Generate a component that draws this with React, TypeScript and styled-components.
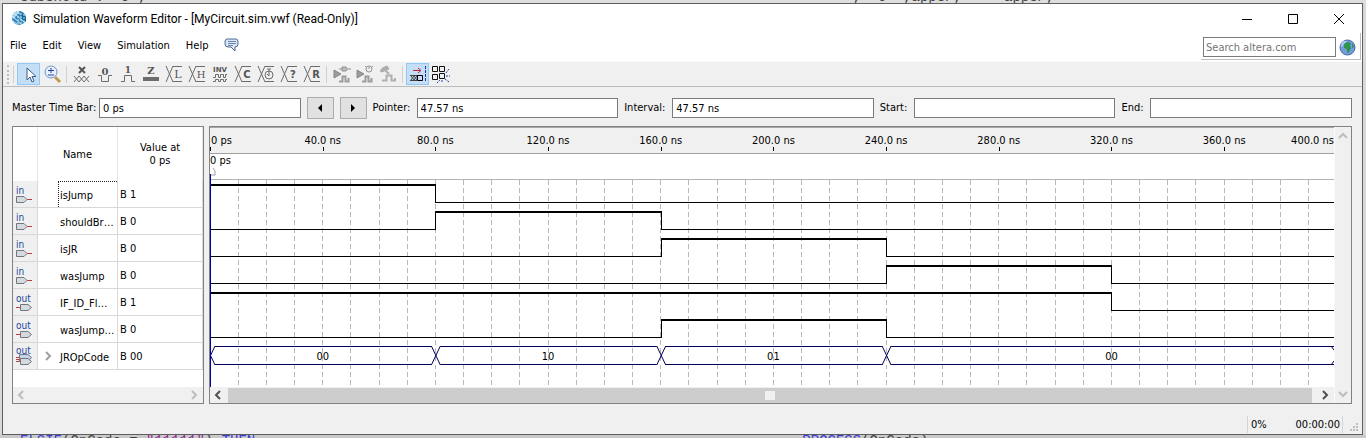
import React from "react";
import styled, { createGlobalStyle, css } from "styled-components";

const GlobalStyle = createGlobalStyle`
  * { box-sizing: border-box; }
  body { margin: 0; background: #d9d9d9; color: #000; font: 11px/14px "DejaVu Sans Condensed", "DejaVu Sans", "Open Sans", sans-serif; }
  input, button { font: inherit; color: inherit; border-radius: 0; margin: 0; }
`;

/* ---------- window frame ---------- */
const Desktop = styled.div`
  display: flex;
  flex-direction: column;
  min-height: 100vh;
`;
const CodeStrip = styled.div<{ $end?: boolean }>`
  display: flex;
  align-items: ${(p) => (p.$end ? "flex-start" : "flex-end")};
  height: ${(p) => (p.$end ? 4 : 3)}px;
  padding: 0 20px;
  overflow: hidden;
  background: ${(p) => (p.$end ? "#c9c9c9" : "#dedede")};
  font: 14px/12px "Liberation Mono", monospace;
  white-space: pre;
  color: #444;
`;
const CodeText = styled.span<{ $second?: boolean }>`
  flex: ${(p) => (p.$second ? "0 0 41%" : "1 1 0")};
  b { font-weight: 400; color: #3b3bd0; }
  i { font-style: normal; color: #8f2f8f; }
`;
const Window = styled.main`
  display: flex;
  flex-direction: column;
  margin: 0 3px 0 2px;
  border: 1px solid #5f5f63;
  background: #f0f0f0;
`;
const TitleBar = styled.header`
  display: flex;
  align-items: center;
  gap: 6px;
  height: 29px;
  padding-left: 8px;
  background: #fff;
`;
const Title = styled.h1`
  flex: 1;
  margin: 0;
  font: 400 12px/16px Roboto, "Open Sans", sans-serif;
`;
const CaptionButtons = styled.div`
  display: flex;
`;
const CaptionButton = styled.button`
  display: flex;
  justify-content: center;
  align-items: center;
  width: 46px;
  height: 28px;
  padding: 0;
  border: 0;
  background: none;
`;
const MenuRow = styled.div`
  display: flex;
  align-items: stretch;
  justify-content: space-between;
  height: 28px;
  background: #fff;
`;
const Menu = styled.nav`
  display: flex;
  align-items: center;
  gap: 16px;
  padding: 0 7px 3px;
`;
const MenuItem = styled.button`
  padding: 0;
  border: 0;
  background: none;
  line-height: 17px;
`;
const Search = styled.form`
  display: flex;
  align-items: center;
  gap: 3px;
  height: 27px;
  margin-right: 1px;
  padding: 2px 4px 0 2px;
  border: solid #bdbdbd;
  border-width: 0 1px 1px 0;
`;
const SearchInput = styled.input`
  width: 133px;
  height: 20px;
  padding: 0 2px;
  border: 1px solid #7a7a7a;
  &::placeholder { color: #757575; opacity: 1; }
`;

/* ---------- tool bar ---------- */
const Toolbar = styled.div`
  display: flex;
  align-items: center;
  height: 26px;
  padding-left: 4px;
  border-top: 1px solid #fafafa;
  border-bottom: 1px solid #bcbcbc;
`;
const Grip = styled.span`
  width: 3px;
  height: 19px;
  border-left: 2px dotted #bdbdbd;
`;
const Divider = styled.span`
  width: 1px;
  height: 17px;
  margin: 0 3px;
  background: #d0d0d0;
`;
const ToolButton = styled.button<{ $on?: boolean }>`
  display: flex;
  justify-content: center;
  align-items: center;
  width: 23px;
  height: 22px;
  padding: 0;
  border: 1px solid transparent;
  background: none;
  ${(p) => p.$on && css`
    border-color: #90c8f6;
    background: #c4dff5;
  `}
`;

/* ---------- time fields ---------- */
const TimeRow = styled.div`
  display: flex;
  align-items: center;
  gap: 6px;
  height: 39px;
  padding: 3px 10px 0 9px;
`;
const TimeLabel = styled.label<{ $w: number }>`
  flex: none;
  width: ${(p) => p.$w}px;
  white-space: nowrap;
`;
const TimeInput = styled.input`
  flex: 1;
  min-width: 0;
  height: 20px;
  padding: 1px 3px 0;
  border: 1px solid #7a7a7a;
  background: #fff;
`;
const StepButton = styled.button`
  display: flex;
  justify-content: center;
  align-items: center;
  width: 27px;
  height: 22px;
  padding: 0;
  border: 1px solid #adadad;
  background: #e1e1e1;
`;

/* ---------- panels ---------- */
const Panels = styled.div`
  display: flex;
  gap: 5px;
  padding: 0 10px 0 9px;
`;
const SignalPanel = styled.section`
  display: flex;
  flex-direction: column;
  justify-content: space-between;
  width: 192px;
  border: 1px solid #828282;
  background: #fff;
`;
const SignalTable = styled.table`
  width: 100%;
  table-layout: fixed;
  border-collapse: separate;
  border-spacing: 0;
`;
const HeadCell = styled.th<{ $w?: number }>`
  width: ${(p) => (p.$w ? `${p.$w}px` : "auto")};
  height: 54px;
  padding: 0;
  border-right: 1px solid #e5e5e5;
  font-weight: 400;
  text-align: center;
  line-height: 13px;
`;
const Cell = styled.td`
  height: 27px;
  padding: 2px 2px 0;
  border: solid #d8d8d8;
  border-width: 0 1px 1px 0;
  white-space: nowrap;
`;
const IconCell = styled(Cell)`
  padding: 0 0 0 3px;
  background: #f0f0f0;
  svg { display: block; overflow: visible; }
`;
const NameCell = styled(Cell)`
  padding: 0;
`;
const NameLine = styled.div`
  display: flex;
  align-items: center;
  height: 26px;
`;
const Expander = styled.span`
  display: flex;
  justify-content: center;
  width: 20px;
`;
const Name = styled.span<{ $focus?: boolean }>`
  flex: 1;
  height: 26px;
  padding-left: 1px;
  line-height: 27px;
  border: 1px dotted transparent;
  border-width: 1px 0 0 1px;
  ${(p) => p.$focus && css`border-color: #222;`}
`;
const HScroll = styled.div`
  display: flex;
  align-items: center;
  height: 16px;
  padding: 0 3px;
  gap: 3px;
  background: #f0f0f0;
`;
const Track = styled.div<{ $thumb?: boolean }>`
  flex: 1;
  display: flex;
  justify-content: center;
  align-items: center;
  height: 15px;
  margin-right: ${(p) => (p.$thumb ? 4 : 0)}px;
  background: ${(p) => (p.$thumb ? "#cdcdcd" : "transparent")};
`;
const Knob = styled.span`
  width: 10px;
  height: 9px;
  background: #f0f0f0;
`;
const WavePanel = styled.section`
  flex: 1;
  display: flex;
  min-width: 0;
  border: 1px solid #828282;
`;
const PlotColumn = styled.div`
  flex: 1;
  min-width: 0;
`;
const Ruler = styled.svg`
  display: block;
  width: 100%;
  height: 27px;
  border-top: 1px solid #a8a8a8;
  border-bottom: 1px solid #a0a0a0;
`;
const MarkerBand = styled.svg`
  display: block;
  width: 100%;
  height: 26px;
  overflow: visible;
  border-bottom: 1px solid #b4b4b4;
  background: #fff;
`;
const Plot = styled.svg`
  display: block;
  width: 100%;
  height: 207px;
  background: #fff;
`;
const VScroll = styled.div`
  display: flex;
  flex-direction: column;
  justify-content: space-between;
  align-items: center;
  width: 17px;
  padding: 3px 0;
  border-left: 1px solid #fafafa;
`;

/* ---------- status bar ---------- */
const StatusBar = styled.footer`
  display: flex;
  justify-content: flex-end;
  align-items: center;
  height: 30px;
  padding: 10px 3px 0 0;
`;
const StatusCell = styled.span<{ $w: number; $right?: boolean }>`
  width: ${(p) => p.$w}px;
  height: 17px;
  padding: 1px 2px 0 3px;
  line-height: 15px;
  text-align: ${(p) => (p.$right ? "right" : "left")};
  border: solid #d4d4d4;
  border-width: ${(p) => (p.$right ? "0 1px 0 0" : "0 0 0 1px")};
`;
const SizeGrip = styled.svg`
  margin: 7px 0 0 7px;
`;

/* ---------- icons ---------- */
const G = "#6c6c6c";

const Chevron = ({ d, color = "#bdbdbd" }: { d: "l" | "r" | "u" | "d"; color?: string }) => {
  const paths = { l: "M7 2L3 6L7 10", r: "M4 2L8 6L4 10", u: "M2 8L6 4L10 8", d: "M2 4L6 8L10 4" };
  return <svg width="12" height="12"><path d={paths[d]} fill="none" stroke={color} strokeWidth="2" /></svg>;
};

const Ic = ({ children }: { children: React.ReactNode }) => (
  <svg width="20" height="20" viewBox="0 0 20 20" fill="none" stroke={G} overflow="visible">{children}</svg>
);

const Glyph = ({ x, y, size = 10, serif, bold = true, children }: { x: number; y: number; size?: number; serif?: boolean; bold?: boolean; children: string }) => (
  <text x={x} y={y} fontSize={size} fontWeight={bold ? 700 : 400} fill="#555" stroke="none" textAnchor="middle"
    fontFamily={serif ? "'DejaVu Serif', serif" : "'DejaVu Sans', sans-serif"}>{children}</text>
);

const BusFrame = () => <path d="M2 2L9 18M9 2L2 18M9 2.5H18M9 17.5H18" />;

const AppLogo = () => (
  <svg width="16" height="17" viewBox="0 0 16 17">
    <circle cx="8" cy="8" r="7" fill="#2d86b8" />
    <path d="M1 8A7 7 0 0 1 8 1L8 4A5 5 0 0 0 4 9Z" fill="#a9d6ee" />
    <path d="M3 3L14 13M1 6L11 15M6 1L15 9M2 11L7 15" stroke="#d6edf8" strokeWidth="1" />
    <path d="M9 2L15 7L15 12L12 10Z" fill="#155c8e" />
    <path d="M10 3V14M13 4V13M7 6V15" stroke="#cfeaf7" strokeWidth="1" strokeDasharray="2 1" />
  </svg>
);

const CommentIcon = () => (
  <svg width="15" height="15" viewBox="0 0 15 15">
    <path d="M3 1H12Q14 1 14 4V6Q14 9 11 9L11 13L7 9H4Q1 9 1 6V4Q1 1 3 1Z" fill="#dce7f5" stroke="#4a6894" strokeLinejoin="round" />
    <path d="M4 3.500H12M4 5.500H12M4 7.500H9" stroke="#6a86b0" />
  </svg>
);

const GlobeIcon = () => (
  <svg width="17" height="17" viewBox="0 0 17 17">
    <circle cx="8.5" cy="8.5" r="7.5" fill="#6f9edc" stroke="#4b679c" />
    <path d="M3 3Q6 1 8 2L5 5L3 8L1.500 7Z" fill="#a9c9f0" />
    <path d="M5 5L9 3L12 4L11 7L12 9L10 13L8 14L8 10L5 9Z" fill="#2f9448" />
    <path d="M13 4L15 8L13 9Z" fill="#2f9448" />
  </svg>
);

const PinIcon = ({ kind }: { kind: "in" | "out" | "bus" }) => {
  const body = kind === "in" ? "M0.500 12.500H8L11 15.500L8 18.500H0.500Z" : "M4.500 12.500H12L15.500 15.500L12 18.500H4.500Z";
  return (
    <svg width="19" height="20" viewBox="0 0 19 20">
      {kind === "in"
        ? <rect x="11" y="15" width="5" height="1" fill="#c23b3b" />
        : <rect x="0" y="15" width="4" height="1" fill="#c23b3b" />}
      {kind === "bus" && (
        <>
          <rect x="0" y="11" width="3" height="1" fill="#c23b3b" />
          <rect x="0" y="13" width="3" height="1" fill="#c23b3b" />
          <path d="M3.500 8.500H12L15.500 11.500L12 15.500H3.500Z" fill="#c6d4e4" stroke="#6a7b90" />
        </>
      )}
      <path d={body} fill="#d5dade" stroke="#71777d" />
      <text x="0" y={kind === "bus" ? 8 : 10} fontSize="10" fill="#23479a" fontFamily="'DejaVu Sans Condensed', sans-serif">{kind === "in" ? "in" : "out"}</text>
    </svg>
  );
};

const SmallWave = () => <path d="M7 17.500H10.500V12.500H13.500V17.500H16.500V14" stroke="#9c9c9c" strokeWidth="2" />;

type Tool = { label: string; icon: React.ReactNode; on?: boolean } | null;

const TOOLS: Tool[] = [
  { label: "Select", on: true, icon: <Ic><path d="M8 4V16L11 13L13 18L15 17L13 12.500H17Z" fill="#fff" stroke="#3c5a8c" /></Ic> },
  { label: "Zoom", icon: (
    <Ic>
      <path d="M13 13L18 18" stroke="#c09a55" strokeWidth="3" />
      <circle cx="9" cy="8" r="6" fill="#e6effb" stroke="#6f94cf" />
      <path d="M9 4V9M6 6.500H12M6 11H12" stroke="#2a3fa8" />
    </Ic>) },
  null,
  { label: "Forcing unknown", icon: <Ic><path d="M7 3L13 9M13 3L7 9" stroke="#555" strokeWidth="2" /><path d="M2 12L7 18L12 12L17 18M2 18L7 12L12 18L17 12" /></Ic> },
  { label: "Forcing low", icon: <Ic><Glyph x={10} y={11} serif>0</Glyph><path d="M3 11.500H6.500V17.500H13.500V11.500H17" strokeWidth="1" /></Ic> },
  { label: "Forcing high", icon: <Ic><Glyph x={10} y={9} size={9} serif>1</Glyph><path d="M3 17.500H6.500V11.500H13.500V17.500H17" /></Ic> },
  { label: "High impedance", icon: <Ic><Glyph x={10} y={10} serif>Z</Glyph><path d="M2 15H18" strokeWidth="4" /></Ic> },
  { label: "Weak low", icon: <Ic><BusFrame /><Glyph x={14} y={14} size={11} serif bold={false}>L</Glyph></Ic> },
  { label: "Weak high", icon: <Ic><BusFrame /><Glyph x={14} y={14} size={10} serif bold={false}>H</Glyph></Ic> },
  { label: "Invert", icon: <Ic><Glyph x={10} y={8} size={7}>INV</Glyph><path d="M3 13.500H5.500V10.500H8.500V13.500H10.500V10.500H13.500V13.500H15.500V10.500H17M3 17.500H5.500V15.500H8.500V17.500H10.500V15.500H13.500V17.500H15.500V15.500H17" /></Ic> },
  { label: "Count value", icon: <Ic><BusFrame /><Glyph x={14} y={14}>C</Glyph></Ic> },
  { label: "Overwrite clock", icon: <Ic><BusFrame /><circle cx="13" cy="11" r="4" /><path d="M13 5V12L11 10M11 5H15" /></Ic> },
  { label: "Arbitrary value", icon: <Ic><BusFrame /><Glyph x={14} y={14}>?</Glyph></Ic> },
  { label: "Random values", icon: <Ic><BusFrame /><Glyph x={14} y={14}>R</Glyph></Ic> },
  null,
  { label: "Run functional simulation", icon: <Ic><path d="M2 6L9 10L2 14Z" fill="#9a9a9a" stroke="#8a8a8a" /><path d="M10 3H14Q17 5 14 7H10ZM7 5H10M16 5H19" fill="#bbb" stroke="#929292" /><SmallWave /></Ic> },
  { label: "Run timing simulation", icon: <Ic><path d="M2 6L9 10L2 14Z" fill="#9a9a9a" stroke="#8a8a8a" /><circle cx="14" cy="5" r="3" stroke="#929292" /><path d="M14 3V5M10 2L11 3M18 2L17 3" stroke="#929292" /><SmallWave /></Ic> },
  { label: "Generate testbench", icon: <Ic><path d="M2 7Q4 3 9 2L11 5L8 6L4 8Z" fill="#adadad" stroke="#adadad" /><path d="M7 6L11 10" stroke="#adadad" strokeWidth="2" /><path d="M4 16.500H8.500V11.500H13.500V16.500H17V14" stroke="#b0b0b0" strokeWidth="2" /></Ic> },
  null,
  { label: "Snap to transition", on: true, icon: (
    <Ic>
      <path d="M5 6.500H12M10 4L13 6.500L10 9" stroke="#c32036" />
      <path d="M2 11.500H9M2 16.500H9M3 12L6 16M6 12L3 16M6 12L9 16M9 12L6 16" stroke="#444" />
      <path d="M9 11.500H14.500V16.500H9.500V11" stroke="#000" />
      <path d="M17.500 2V18" stroke="#1d2fb0" strokeDasharray="3 1" />
    </Ic>) },
  { label: "Snap to grid", icon: (
    <Ic>
      <path d="M1.500 2.500H6.500V7.500H1.500ZM8.500 2.500H13.500V7.500H8.500ZM1.500 10.500H6.500V15.500H1.500ZM8.500 9.500H13.500V14.500H8.500Z" stroke="#111" strokeWidth="1" />
      <path d="M15 9L18 5M15 12H19M14 15L18 18M11 16V19M6 19L9 16" stroke="#2a3fb0" strokeDasharray="2 1" />
    </Ic>) },
];

/* ---------- waveforms ---------- */
const SPAN = 399;
const at = (ns: number) => `${(ns / SPAN) * 100}%`;

type Signal = { name: string; value: string; kind: "in" | "out" | "bus"; high?: [number, number] };
const SIGNALS: Signal[] = [
  { name: "isJump", value: "B 1", kind: "in", high: [0, 80] },
  { name: "shouldBr…", value: "B 0", kind: "in", high: [80, 160] },
  { name: "isJR", value: "B 0", kind: "in", high: [160, 240] },
  { name: "wasJump", value: "B 0", kind: "in", high: [240, 320] },
  { name: "IF_ID_Fl…", value: "B 1", kind: "out", high: [0, 320] },
  { name: "wasJump…", value: "B 0", kind: "out", high: [160, 240] },
  { name: "JROpCode", value: "B 00", kind: "bus" },
];
const BUS = [
  { from: 0, to: 80, text: "00" },
  { from: 80, to: 160, text: "10" },
  { from: 160, to: 240, text: "01" },
  { from: 240, to: 400, text: "00" },
];

const BitWave = ({ row, high: [a, b] }: { row: number; high: [number, number] }) => {
  const y = 4 + row * 27;
  return (
    <g shapeRendering="crispEdges">
      {a > 0 && <rect x="0" y={y + 18} width={at(a)} height="1" />}
      {a > 0 && <rect x={at(a)} y={y} width="1" height="19" />}
      <rect x={at(a)} y={y} width={at(b - a)} height="2" />
      <rect x={at(b)} y={y} width="1" height="19" />
      <rect x={at(b)} y={y + 18} width={at(SPAN - b)} height="1" />
    </g>
  );
};

const BusWave = ({ y }: { y: number }) => (
  <>
    <g fill="#00005c" shapeRendering="crispEdges">
      <rect x="0" y={y} width="100%" height="1" />
      <rect x="0" y={y + 18} width="100%" height="1" />
    </g>
    {BUS.map((s) => (
      <React.Fragment key={s.from}>
        <svg x={at(s.from)} y={y} overflow="visible">
          <path d="M-4 0.500H5M-4 18.500H5" stroke="#fff" />
          <path d="M-4 0L5 19M-4 19L5 0" fill="none" stroke="#00005c" />
        </svg>
        <text x={at((s.from + s.to) / 2)} y={y + 14} textAnchor="middle">{s.text}</text>
      </React.Fragment>
    ))}
    <svg x="100%" y={y} overflow="visible">
      <path d="M-3 0L0 4M-3 19L0 15" stroke="#00005c" />
    </svg>
  </>
);

const Waveforms = () => (
  <PlotColumn>
    <Ruler>
      {Array.from({ length: 10 }, (_, i) => i * 40).map((ns) => (
        <g key={ns}>
          <text x={ns ? at(ns) : 1} y="16" textAnchor={ns ? "middle" : "start"}>{ns ? `${ns}.0 ns` : "0 ps"}</text>
          <rect x={at(ns)} y="19" width="1" height="4" shapeRendering="crispEdges" />
        </g>
      ))}
      <text x="100%" y="16" textAnchor="end">400.0 ns</text>
    </Ruler>
    <MarkerBand>
      <text x="0" y="10">0 ps</text>
      <path d="M0 21H5V17L3 14" fill="none" stroke="#a0a0a0" />
      <rect x="0" y="20" width="1" height="6" fill="#0000a8" />
    </MarkerBand>
    <Plot role="img" aria-label="Signal waveforms">
      {Array.from({ length: 39 }, (_, i) => (i + 1) * 10).map((ns) => (
        <line key={ns} x1={at(ns)} x2={at(ns)} y1="0" y2="207" stroke="#b8b8b8" strokeDasharray="5 3" shapeRendering="crispEdges" />
      ))}
      {SIGNALS.map((s, i) => s.high ? <BitWave key={s.name} row={i} high={s.high} /> : <BusWave key={s.name} y={4 + i * 27} />)}
      <rect x="0" y="0" width="1" height="207" fill="#0000a8" />
    </Plot>
    <HScroll>
      <Chevron d="l" color="#505050" />
      <Track $thumb><Knob /></Track>
      <Chevron d="r" color="#505050" />
    </HScroll>
  </PlotColumn>
);

export default function App() {
  return (
    <>
      <GlobalStyle />
      <Desktop>
        <CodeStrip>
          <CodeText>subsheld : '0';</CodeText>
          <CodeText $second>{"      , '0' ,apps/,     apps/,"}</CodeText>
        </CodeStrip>
        <Window>
          <TitleBar>
            <AppLogo />
            <Title>Simulation Waveform Editor - [MyCircuit.sim.vwf (Read-Only)]</Title>
            <CaptionButtons>
              <CaptionButton aria-label="Minimize"><svg width="12" height="12"><path d="M1 6.500H11" stroke="#000" /></svg></CaptionButton>
              <CaptionButton aria-label="Maximize"><svg width="12" height="12"><path d="M1.500 1.500H10.500V10.500H1.500Z" fill="none" stroke="#000" /></svg></CaptionButton>
              <CaptionButton aria-label="Close"><svg width="12" height="12"><path d="M1 1L11 11M11 1L1 11" stroke="#000" /></svg></CaptionButton>
            </CaptionButtons>
          </TitleBar>
          <MenuRow>
            <Menu>
              {["File", "Edit", "View", "Simulation", "Help"].map((m) => <MenuItem key={m}>{m}</MenuItem>)}
              <CommentIcon />
            </Menu>
            <Search>
              <SearchInput aria-label="Search altera.com" placeholder="Search altera.com" />
              <GlobeIcon />
            </Search>
          </MenuRow>
          <Toolbar>
            <Grip />
            <Divider />
            {TOOLS.map((t, i) => t
              ? <ToolButton key={i} $on={t.on} aria-label={t.label}>{t.icon}</ToolButton>
              : <Divider key={i} />)}
          </Toolbar>
          <TimeRow>
            <TimeLabel $w={81} htmlFor="master">Master Time Bar:</TimeLabel>
            <TimeInput id="master" defaultValue="0 ps" />
            <StepButton aria-label="Previous"><svg width="6" height="8"><path d="M5 0V8L1 4Z" /></svg></StepButton>
            <StepButton aria-label="Next"><svg width="6" height="8"><path d="M1 0V8L5 4Z" /></svg></StepButton>
            <TimeLabel $w={38} htmlFor="pointer">Pointer:</TimeLabel>
            <TimeInput id="pointer" readOnly value="47.57 ns" />
            <TimeLabel $w={42} htmlFor="interval">Interval:</TimeLabel>
            <TimeInput id="interval" readOnly value="47.57 ns" />
            <TimeLabel $w={28} htmlFor="start">Start:</TimeLabel>
            <TimeInput id="start" />
            <TimeLabel $w={23} htmlFor="end">End:</TimeLabel>
            <TimeInput id="end" />
          </TimeRow>
          <Panels>
            <SignalPanel>
              <SignalTable>
                <thead>
                  <tr>
                    <HeadCell $w={25} />
                    <HeadCell $w={80}>Name</HeadCell>
                    <HeadCell>Value at<br />0 ps</HeadCell>
                  </tr>
                </thead>
                <tbody>
                  {SIGNALS.map((s, i) => (
                    <tr key={s.name}>
                      <IconCell><PinIcon kind={s.kind} /></IconCell>
                      <NameCell>
                        <NameLine>
                          <Expander>{s.kind === "bus" && <Chevron d="r" color="#a0a0a0" />}</Expander>
                          <Name $focus={i === 0}>{s.name}</Name>
                        </NameLine>
                      </NameCell>
                      <Cell>{s.value}</Cell>
                    </tr>
                  ))}
                </tbody>
              </SignalTable>
              <HScroll>
                <Chevron d="l" />
                <Track />
                <Chevron d="r" />
              </HScroll>
            </SignalPanel>
            <WavePanel>
              <Waveforms />
              <VScroll>
                <Chevron d="u" />
                <Chevron d="d" />
              </VScroll>
            </WavePanel>
          </Panels>
          <StatusBar>
            <StatusCell $w={40}>0%</StatusCell>
            <StatusCell $w={56} $right>00:00:00</StatusCell>
            <SizeGrip width="9" height="9" fill="#bfbfbf">
              <path d="M6 0H8V2H6ZM3 3H5V5H3ZM6 3H8V5H6ZM0 6H2V8H0ZM3 6H5V8H3ZM6 6H8V8H6Z" />
            </SizeGrip>
          </StatusBar>
        </Window>
        <CodeStrip $end>
          <CodeText><b>ELSIF</b>(OpCode = <i>"11111"</i>) <b>THEN</b></CodeText>
          <CodeText $second><b>PROCESS</b>(OpCode)</CodeText>
        </CodeStrip>
      </Desktop>
    </>
  );
}
